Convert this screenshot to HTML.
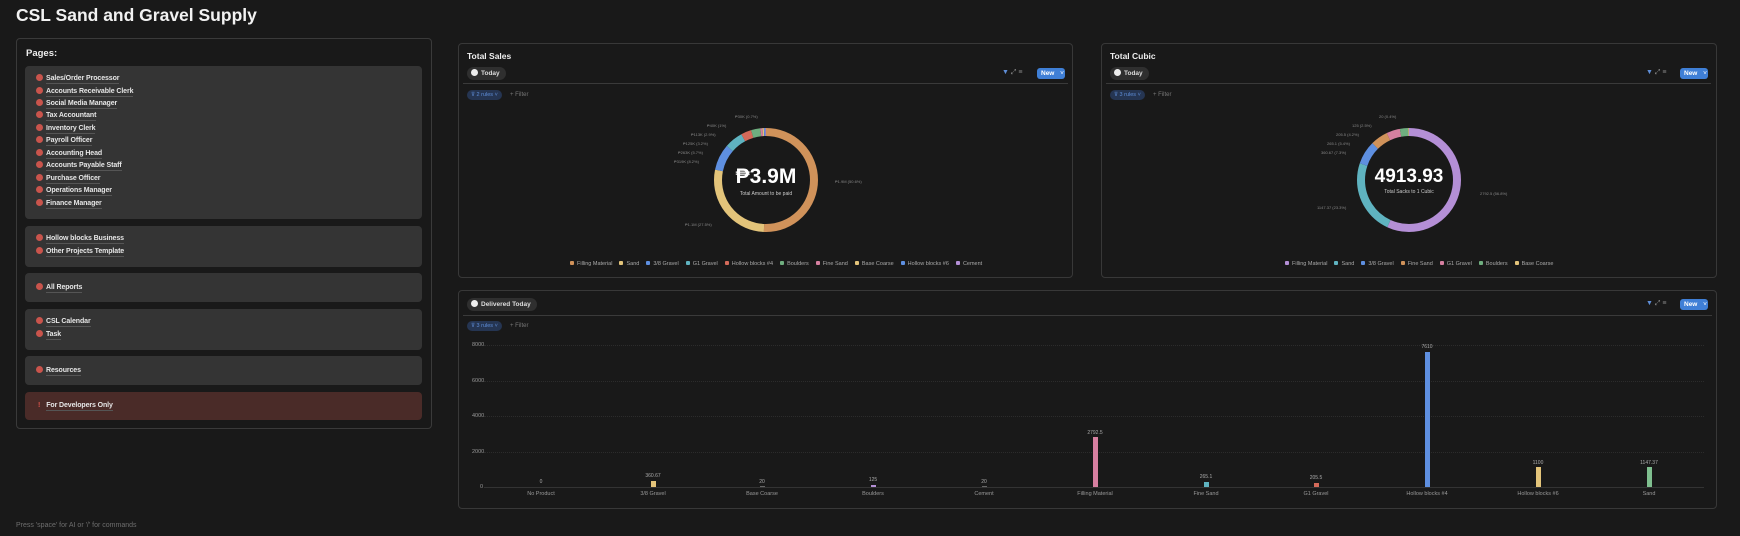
<!DOCTYPE html>
<html><head><meta charset="utf-8"><style>
*{box-sizing:border-box;margin:0;padding:0}
body{width:1740px;height:536px;background:#191919;font-family:"Liberation Sans",sans-serif;color:#e8e8e8;position:relative;overflow:hidden}
.a{position:absolute;white-space:nowrap}
.title{left:16px;top:5px;font-size:17.5px;font-weight:bold;color:#f2f2f2}
.lp{left:16px;top:38px;width:416px;height:391px;border:1px solid #3a3a3a;border-radius:4px}
.blk{position:absolute;left:25px;width:397px;background:#343434;border-radius:4px}
.it{position:absolute;left:11px;font-size:7px;font-weight:bold;color:#e6e6e6;white-space:nowrap;letter-spacing:-0.1px}
.it i{display:inline-block;width:7px;height:7px;border-radius:50%;background:#c9544c;margin-right:3px;vertical-align:-1px}
.it span{border-bottom:1px solid #555;padding-bottom:1px}
.pn{border:1px solid #383838;border-radius:4px}
.pt{font-size:8.5px;font-weight:bold;color:#eee}
.pill{background:#2f2f2f;border-radius:7px;font-size:6.5px;font-weight:bold;color:#ddd;padding:2px 6px 2px 4px;height:13px;line-height:9px}
.pill b{display:inline-block;width:7px;height:7px;border-radius:50%;background:#eee;margin-right:3px;vertical-align:-1px}
.hr{height:1px;background:#3a3a3a}
.rules{background:#253552;color:#5f8ed8;font-size:5.5px;border-radius:5px;height:10px;line-height:10px;padding:0 4px}
.flt{font-size:6px;color:#777}
.new{background:#3f7fd6;color:#fff;font-size:6.5px;font-weight:bold;border-radius:3px;width:28px;height:11px;line-height:11px;padding-left:4px}
.ic{font-size:7px;color:#888}
.leg{font-size:5.5px;color:#aaa;white-space:nowrap}
.leg i{display:inline-block;width:4px;height:4px;margin:0 3px 0 7px;border-radius:1px}
.sm{font-size:4px;color:#888;white-space:nowrap}
.xl{font-size:5.5px;color:#999;text-align:center;width:80px;top:491px}
.yl{font-size:5.5px;color:#999;left:472px}
.bar{position:absolute;width:5px;bottom:49px}
.bv{font-size:5px;color:#aaa;text-align:center;width:40px}
.gl{left:484px;width:1220px;height:0;border-top:1px dotted #2c2c2c}
</style></head><body>
<div class="a title">CSL Sand and Gravel Supply</div>
<div class="a lp"></div>
<div class="a" style="left:26px;top:48px;font-size:9.5px;font-weight:bold;color:#eee">Pages:</div>
<div class="blk" style="top:66px;height:153px">
<div class="it" style="top:8px"><i></i><span>Sales/Order Processor</span></div>
<div class="it" style="top:21px"><i></i><span>Accounts Receivable Clerk</span></div>
<div class="it" style="top:33px"><i></i><span>Social Media Manager</span></div>
<div class="it" style="top:45px"><i></i><span>Tax Accountant</span></div>
<div class="it" style="top:58px"><i></i><span>Inventory Clerk</span></div>
<div class="it" style="top:70px"><i></i><span>Payroll Officer</span></div>
<div class="it" style="top:83px"><i></i><span>Accounting Head</span></div>
<div class="it" style="top:95px"><i></i><span>Accounts Payable Staff</span></div>
<div class="it" style="top:108px"><i></i><span>Purchase Officer</span></div>
<div class="it" style="top:120px"><i></i><span>Operations Manager</span></div>
<div class="it" style="top:133px"><i></i><span>Finance Manager</span></div>
</div>
<div class="blk" style="top:226px;height:41px">
<div class="it" style="top:8px"><i></i><span>Hollow blocks Business</span></div>
<div class="it" style="top:21px"><i></i><span>Other Projects Template</span></div>
</div>
<div class="blk" style="top:273px;height:29px"><div class="it" style="top:10px"><i></i><span>All Reports</span></div></div>
<div class="blk" style="top:309px;height:41px">
<div class="it" style="top:8px"><i></i><span>CSL Calendar</span></div>
<div class="it" style="top:21px"><i></i><span>Task</span></div>
</div>
<div class="blk" style="top:356px;height:29px"><div class="it" style="top:10px"><i></i><span>Resources</span></div></div>
<div class="blk" style="top:392px;height:28px;background:#4a2b28"><div class="it" style="top:10px"><b style="color:#d9534a;margin-right:6px;margin-left:2px">!</b><span>For Developers Only</span></div></div>

<!-- Total Sales -->
<div class="a pn" style="left:458px;top:43px;width:615px;height:235px"></div>
<div class="a pt" style="left:467px;top:51px">Total Sales</div>
<div class="a pill" style="left:467px;top:67px"><b></b>Today</div>
<div class="a ic" style="left:1002px;top:69px"><span style="color:#5f8ed8">▼</span> ⤢ ≡</div>
<div class="a new" style="left:1037px;top:68px">New <span style="margin-left:4px;font-weight:normal">˅</span></div>
<div class="a hr" style="left:463px;top:83px;width:605px"></div>
<div class="a rules" style="left:467px;top:90px">⊽ 2 rules ˅</div>
<div class="a flt" style="left:510px;top:92px">+ Filter</div>
<svg class="a" style="left:706px;top:120px" width="120" height="120" viewBox="0 0 120 120">
<g transform="rotate(-90 60 60)" fill="none" stroke-width="8">
<circle cx="60" cy="60" r="48" stroke="#d0925a" stroke-dasharray="152.6 301.6"/>
<circle cx="60" cy="60" r="48" stroke="#e3c47a" stroke-dasharray="0 152.6 82.9 301.6"/>
<circle cx="60" cy="60" r="48" stroke="#5e8fe0" stroke-dasharray="0 235.5 24.7 301.6"/>
<circle cx="60" cy="60" r="48" stroke="#5fb3c0" stroke-dasharray="0 260.2 17.2 301.6"/>
<circle cx="60" cy="60" r="48" stroke="#d46a5a" stroke-dasharray="0 277.4 9.7 301.6"/>
<circle cx="60" cy="60" r="48" stroke="#6fae7f" stroke-dasharray="0 287.1 8.7 301.6"/>
<circle cx="60" cy="60" r="48" stroke="#d67fa0" stroke-dasharray="0 295.8 2 301.6"/>
<circle cx="60" cy="60" r="48" stroke="#e3c47a" stroke-dasharray="0 297.8 1.3 301.6"/>
<circle cx="60" cy="60" r="48" stroke="#5e8fe0" stroke-dasharray="0 299.1 1.3 301.6"/>
<circle cx="60" cy="60" r="48" stroke="#b48fd6" stroke-dasharray="0 300.4 1.2 301.6"/>
</g></svg>
<div class="a" style="left:706px;top:165px;width:120px;text-align:center;font-size:21px;font-weight:bold;color:#fff">₱3.9M</div>
<div class="a" style="left:706px;top:191px;width:120px;text-align:center;font-size:5px;color:#ccc">Total Amount to be paid</div>
<div class="a sm" style="left:835px;top:179px">₱1.9M (50.6%)</div>
<div class="a sm" style="left:685px;top:222px">₱1.1M (27.5%)</div>
<div class="a sm" style="left:674px;top:159px">₱319K (8.2%)</div>
<div class="a sm" style="left:678px;top:150px">₱263K (5.7%)</div>
<div class="a sm" style="left:683px;top:141px">₱125K (3.2%)</div>
<div class="a sm" style="left:691px;top:132px">₱113K (2.9%)</div>
<div class="a sm" style="left:707px;top:123px">₱40K (1%)</div>
<div class="a sm" style="left:735px;top:114px">₱30K (0.7%)</div>
<div class="a leg" style="left:563px;top:261px"><i style="background:#d0925a"></i>Filling Material<i style="background:#e3c47a"></i>Sand<i style="background:#5e8fe0"></i>3/8 Gravel<i style="background:#5fb3c0"></i>G1 Gravel<i style="background:#d46a5a"></i>Hollow blocks #4<i style="background:#6fae7f"></i>Boulders<i style="background:#d67fa0"></i>Fine Sand<i style="background:#e3c47a"></i>Base Coarse<i style="background:#5e8fe0"></i>Hollow blocks #6<i style="background:#b48fd6"></i>Cement</div>

<!-- Total Cubic -->
<div class="a pn" style="left:1101px;top:43px;width:616px;height:235px"></div>
<div class="a pt" style="left:1110px;top:51px">Total Cubic</div>
<div class="a pill" style="left:1110px;top:67px"><b></b>Today</div>
<div class="a ic" style="left:1646px;top:69px"><span style="color:#5f8ed8">▼</span> ⤢ ≡</div>
<div class="a new" style="left:1680px;top:68px">New <span style="margin-left:4px;font-weight:normal">˅</span></div>
<div class="a hr" style="left:1106px;top:83px;width:605px"></div>
<div class="a rules" style="left:1110px;top:90px">⊽ 3 rules ˅</div>
<div class="a flt" style="left:1153px;top:92px">+ Filter</div>
<svg class="a" style="left:1349px;top:120px" width="120" height="120" viewBox="0 0 120 120">
<g transform="rotate(-90 60 60)" fill="none" stroke-width="8">
<circle cx="60" cy="60" r="48" stroke="#b48fd6" stroke-dasharray="171.3 301.6"/>
<circle cx="60" cy="60" r="48" stroke="#5fb3c0" stroke-dasharray="0 171.3 70.3 301.6"/>
<circle cx="60" cy="60" r="48" stroke="#5e8fe0" stroke-dasharray="0 241.6 22 301.6"/>
<circle cx="60" cy="60" r="48" stroke="#d0925a" stroke-dasharray="0 263.6 16.3 301.6"/>
<circle cx="60" cy="60" r="48" stroke="#d67fa0" stroke-dasharray="0 279.9 12.7 301.6"/>
<circle cx="60" cy="60" r="48" stroke="#6fae7f" stroke-dasharray="0 292.6 7.8 301.6"/>
<circle cx="60" cy="60" r="48" stroke="#e3c47a" stroke-dasharray="0 300.4 1.2 301.6"/>
</g></svg>
<div class="a" style="left:1349px;top:166px;width:120px;text-align:center;font-size:19px;font-weight:bold;color:#fff">4913.93</div>
<div class="a" style="left:1349px;top:189px;width:120px;text-align:center;font-size:5px;color:#ccc">Total Sacks to 1 Cubic</div>
<div class="a sm" style="left:1480px;top:191px">2792.5 (56.8%)</div>
<div class="a sm" style="left:1317px;top:205px">1147.37 (23.3%)</div>
<div class="a sm" style="left:1321px;top:150px">360.67 (7.3%)</div>
<div class="a sm" style="left:1327px;top:141px">265.1 (5.4%)</div>
<div class="a sm" style="left:1336px;top:132px">205.5 (4.2%)</div>
<div class="a sm" style="left:1352px;top:123px">125 (2.5%)</div>
<div class="a sm" style="left:1379px;top:114px">20 (0.4%)</div>
<div class="a leg" style="left:1278px;top:261px"><i style="background:#b48fd6"></i>Filling Material<i style="background:#5fb3c0"></i>Sand<i style="background:#5e8fe0"></i>3/8 Gravel<i style="background:#d0925a"></i>Fine Sand<i style="background:#d67fa0"></i>G1 Gravel<i style="background:#6fae7f"></i>Boulders<i style="background:#e3c47a"></i>Base Coarse</div>

<!-- Delivered -->
<div class="a pn" style="left:458px;top:290px;width:1259px;height:219px"></div>
<div class="a pill" style="left:467px;top:298px"><b></b>Delivered Today</div>
<div class="a ic" style="left:1646px;top:300px"><span style="color:#5f8ed8">▼</span> ⤢ ≡</div>
<div class="a new" style="left:1680px;top:299px">New <span style="margin-left:4px;font-weight:normal">˅</span></div>
<div class="a hr" style="left:463px;top:315px;width:1249px"></div>
<div class="a rules" style="left:467px;top:321px">⊽ 3 rules ˅</div>
<div class="a flt" style="left:510px;top:323px">+ Filter</div>
<div class="a yl" style="top:342px">8000</div><div class="a gl" style="top:345px"></div>
<div class="a yl" style="top:378px">6000</div><div class="a gl" style="top:381px"></div>
<div class="a yl" style="top:413px">4000</div><div class="a gl" style="top:416px"></div>
<div class="a yl" style="top:449px">2000</div><div class="a gl" style="top:452px"></div>
<div class="a yl" style="top:484px;left:480px">0</div>
<div class="a" style="left:484px;top:487px;width:1220px;height:1px;background:#333"></div>
<div class="bar" style="left:651px;height:6px;background:#e3c47a"></div>
<div class="bar" style="left:760px;height:1px;background:#666"></div>
<div class="bar" style="left:871px;height:2px;background:#b48fd6"></div>
<div class="bar" style="left:982px;height:1px;background:#666"></div>
<div class="bar" style="left:1093px;height:50px;background:#d67fa0"></div>
<div class="bar" style="left:1204px;height:5px;background:#5fb3c0"></div>
<div class="bar" style="left:1314px;height:4px;background:#d46a5a"></div>
<div class="bar" style="left:1425px;height:135px;background:#5e8fe0"></div>
<div class="bar" style="left:1536px;height:20px;background:#e3c47a"></div>
<div class="bar" style="left:1647px;height:20px;background:#7fbf8f"></div>
<div class="a bv" style="left:521px;top:479px">0</div>
<div class="a bv" style="left:633px;top:473px">360.67</div>
<div class="a bv" style="left:742px;top:479px">20</div>
<div class="a bv" style="left:853px;top:477px">125</div>
<div class="a bv" style="left:964px;top:479px">20</div>
<div class="a bv" style="left:1075px;top:430px">2792.5</div>
<div class="a bv" style="left:1186px;top:474px">265.1</div>
<div class="a bv" style="left:1296px;top:475px">205.5</div>
<div class="a bv" style="left:1407px;top:344px">7610</div>
<div class="a bv" style="left:1518px;top:460px">1100</div>
<div class="a bv" style="left:1629px;top:460px">1147.37</div>
<div class="a xl" style="left:501px">No Product</div>
<div class="a xl" style="left:613px">3/8 Gravel</div>
<div class="a xl" style="left:722px">Base Coarse</div>
<div class="a xl" style="left:833px">Boulders</div>
<div class="a xl" style="left:944px">Cement</div>
<div class="a xl" style="left:1055px">Filling Material</div>
<div class="a xl" style="left:1166px">Fine Sand</div>
<div class="a xl" style="left:1276px">G1 Gravel</div>
<div class="a xl" style="left:1387px">Hollow blocks #4</div>
<div class="a xl" style="left:1498px">Hollow blocks #6</div>
<div class="a xl" style="left:1609px">Sand</div>

<div class="a" style="left:16px;top:522px;font-size:7px;color:#6e6e6e">Press 'space' for AI or '/' for commands</div>
</body></html>
